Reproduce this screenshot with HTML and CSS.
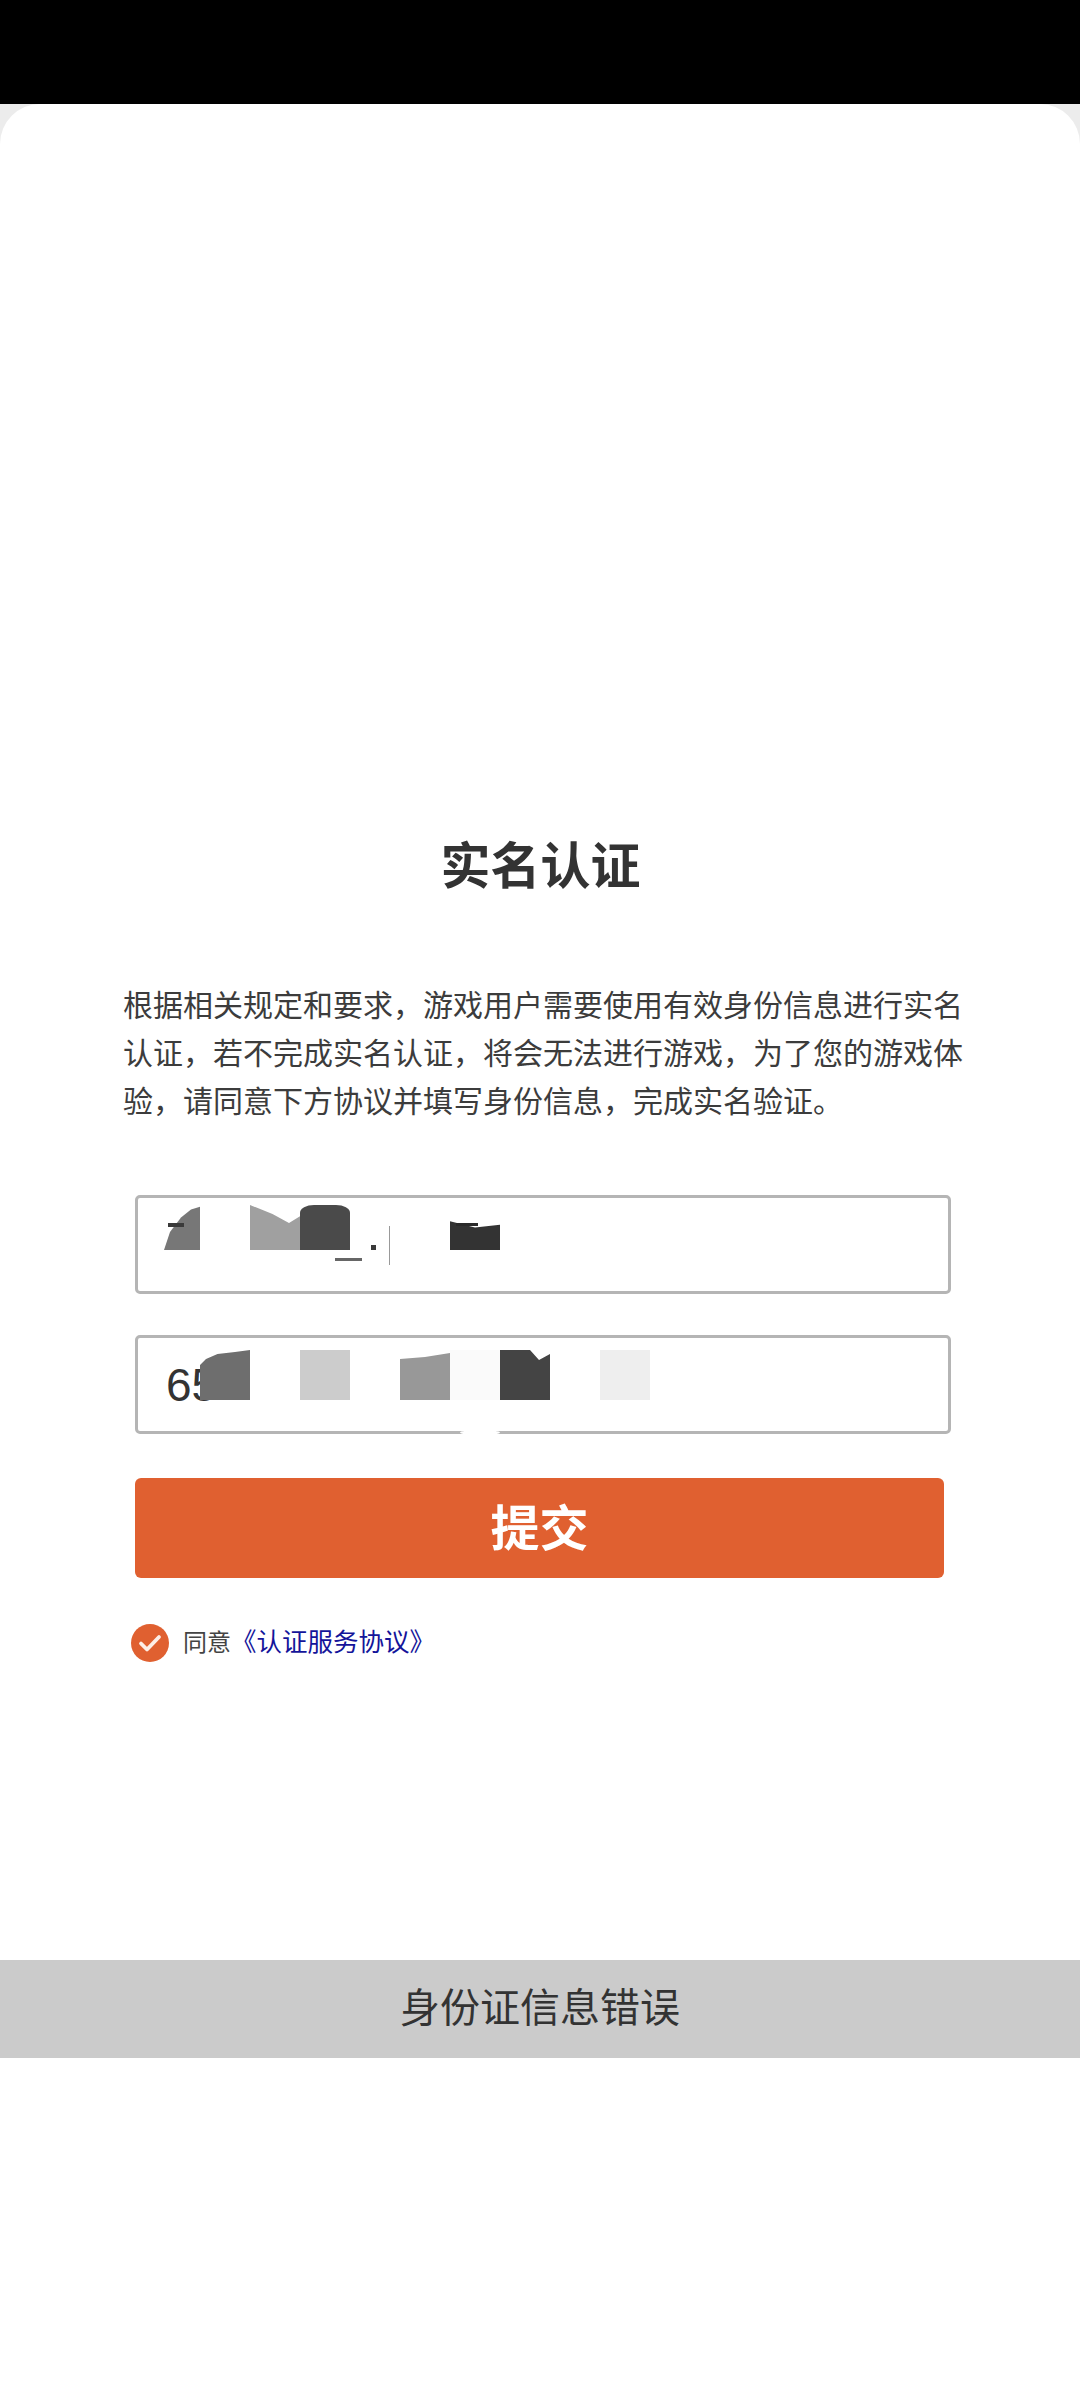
FILE: index.html
```html
<!DOCTYPE html>
<html lang="zh-CN">
<head>
  <meta charset="UTF-8" />
  <meta name="viewport" content="width=device-width, initial-scale=1.0" />
  <title>实名认证</title>
  <link rel="stylesheet" href="styles.css">
</head>
<body>
  <div class="top-bar"></div>
  <div class="sheet">
    <h1>实名认证</h1>
    <p class="intro">根据相关规定和要求，游戏用户需要使用有效身份信息进行实名认证，若不完成实名认证，将会无法进行游戏，为了您的游戏体验，请同意下方协议并填写身份信息，完成实名验证。</p>
    <form class="auth-form">
      <div class="field">
        <input type="text" aria-label="姓名" />
        <div class="mosaic mosaic-name">
          <span class="block slant g77"></span>
          <span class="block"></span>
          <span class="block fall ga0"></span>
          <span class="block dome g4a"></span>
          <span class="block"></span>
          <span class="block"></span>
          <span class="block low g33"></span>
        </div>
        <span class="speck dash-a"></span>
        <span class="speck dash-b"></span>
        <span class="speck dot"></span>
        <span class="speck bar"></span>
        <span class="speck dash-c"></span>
      </div>
      <div class="field">
        <input type="text" value="65" aria-label="身份证号" />
        <div class="mosaic mosaic-id">
          <span class="block round g6e"></span>
          <span class="block"></span>
          <span class="block gcc"></span>
          <span class="block"></span>
          <span class="block soft g98"></span>
          <span class="block gfa"></span>
          <span class="block notch g44"></span>
          <span class="block"></span>
          <span class="block gee"></span>
        </div>
        <span class="smudge"></span>
      </div>
      <button type="button" class="submit-btn">提交</button>
      <div class="agree">
        <svg class="check" viewBox="0 0 38 38" width="38" height="38" aria-hidden="true">
          <circle cx="19" cy="19" r="19" fill="#e06030" />
          <path d="M10 19.5l6 6L28 13" fill="none" stroke="#fdeee6" stroke-width="3.8" stroke-linecap="round" stroke-linejoin="round" />
        </svg>
        <span class="agree-text">同意<a href="#">《认证服务协议》</a></span>
      </div>
    </form>
    <div class="toast">身份证信息错误</div>
  </div>
</body>
</html>
```

FILE: styles.css
```css
* {
  margin: 0;
  padding: 0;
  box-sizing: border-box;
  font-family: "Noto Sans CJK SC", "Noto Sans", sans-serif;
}

body {
  background-color: #ececec;
  height: 2400px;
  overflow: hidden;
  position: relative;
}

.top-bar {
  height: 104px;
  background: #000;
}

.sheet {
  height: 2296px;
  background: #fff;
  border-radius: 40px 40px 0 0;
  padding-top: 723px;
}

h1 {
  font-size: 50px;
  line-height: 70px;
  font-weight: 700;
  color: #333;
  text-align: center;
  margin-left: 1px;
}

.intro {
  width: 842px;
  margin: 82px 0 0 123px;
  font-size: 30px;
  line-height: 48px;
  color: #3c3c3c;
}

.auth-form {
  margin: 72px 0 0 135px;
}

.field {
  position: relative;
  width: 816px;
  height: 99px;
  margin-bottom: 41px;
}

.field input {
  display: block;
  width: 100%;
  height: 100%;
  border: 3px solid #b5b5b5;
  border-radius: 5px;
  background: #fff;
  padding-left: 28px;
  font-family: "Liberation Sans", Arial, sans-serif;
  font-size: 46px;
  color: #333;
  outline: none;
}

.mosaic {
  position: absolute;
  display: flex;
}

.mosaic-name {
  left: 15px;
  top: 10px;
  height: 45px;
}

.mosaic-id {
  left: 65px;
  top: 15px;
  height: 50px;
}

.block {
  width: 50px;
  height: 100%;
}

.g33 { background: #333; }
.g44 { background: #444; }
.g4a { background: #4a4a4a; }
.g6e { background: #6e6e6e; }
.g77 { background: #777; }
.g98 { background: #989898; }
.ga0 { background: #a0a0a0; }
.gcc { background: #ccc; }
.gee { background: #eee; }
.gfa { background: #fafafa; }

.slant { clip-path: polygon(28% 100%, 40% 60%, 62% 28%, 82% 10%, 100% 4%, 100% 100%); }
.fall { clip-path: polygon(0 0, 45% 20%, 78% 40%, 100% 25%, 100% 100%, 0 100%); }
.dome { border-radius: 14px 14px 0 0 / 8px 8px 0 0; }
.low { clip-path: polygon(0 36%, 50% 50%, 100% 44%, 100% 100%, 0 100%); }
.round { clip-path: polygon(0 100%, 0 30%, 12% 18%, 35% 8%, 70% 4%, 100% 0, 100% 100%); }
.soft { clip-path: polygon(0 18%, 50% 14%, 100% 6%, 100% 100%, 0 100%); }
.notch { clip-path: polygon(0 0, 60% 0, 78% 20%, 100% 8%, 100% 100%, 0 100%); }

.speck {
  position: absolute;
  background: #3a3a3a;
}

.dash-a { left: 33px; top: 28px; width: 16px; height: 4px; }
.dash-b { left: 321px; top: 28px; width: 22px; height: 3px; background: #2a2a2a; }
.dot { left: 236px; top: 50px; width: 5px; height: 5px; }
.bar { left: 254px; top: 31px; width: 1px; height: 39px; background: #999; }
.dash-c { left: 200px; top: 63px; width: 27px; height: 3px; background: #666; }

.smudge {
  position: absolute;
  left: 325px;
  bottom: -1px;
  width: 40px;
  height: 5px;
  background: #fff;
  border-radius: 50%;
}

.submit-btn {
  display: block;
  width: 809px;
  height: 100px;
  margin-top: 44px;
  padding-bottom: 7px;
  border: none;
  border-radius: 6px;
  background: #e06030;
  color: #fff;
  font-size: 49px;
  font-weight: 700;
  cursor: pointer;
}

.agree {
  display: flex;
  align-items: center;
  gap: 14px;
  margin: 46px 0 0 -4px;
  font-size: 24px;
  line-height: 38px;
  color: #444;
}

.agree-text {
  margin-top: -5px;
}

.check {
  display: block;
  flex: none;
}

.agree a {
  color: #14149a;
  font-size: 25.5px;
  text-decoration: none;
}

.toast {
  margin-top: 298px;
  height: 98px;
  background: #cbcbcb;
  color: #333;
  font-size: 40px;
  line-height: 90px;
  text-align: center;
}
```
